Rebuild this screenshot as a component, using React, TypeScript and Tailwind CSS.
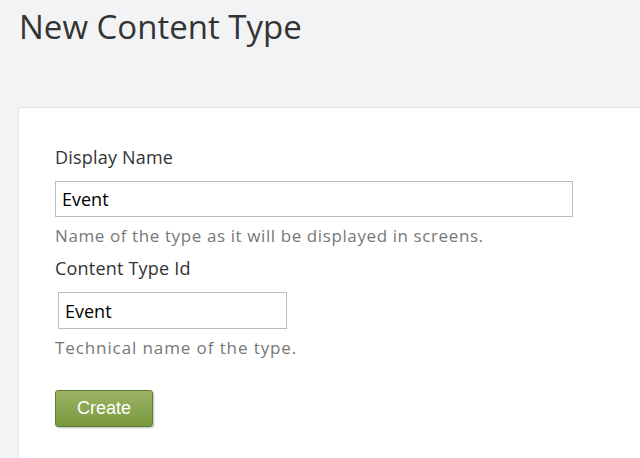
import React from 'react';

const App = () => {
    return (
        <div className="min-h-[458px] bg-[#f2f3f5] pt-[4px] pl-[18px] font-['Open_Sans',sans-serif] overflow-hidden">
            <h1 className="text-[33px] leading-[46px] text-[#333] pl-[1px] mb-[57px]">New Content Type</h1>

            <div className="bg-white border border-[#e3e3e3] rounded-tl-[3px] border-r-0 border-b-0 pl-[36px] pt-[36px] pb-[40px]">
                <label className="block text-[18px] leading-[26px] tracking-[0.2px] text-[#333]">Display Name</label>
                <input
                    defaultValue="Event"
                    className="mt-[11px] block w-[518px] h-[36px] border border-[#bcbcbc] px-[6px] text-[18px] text-black outline-none"
                />
                <p className="mt-[8px] text-[17px] leading-[22px] tracking-[0.6px] text-[#777]">Name of the type as it will be displayed in screens.</p>

                <label className="block mt-[8px] text-[18px] leading-[26px] tracking-[0.2px] text-[#333]">Content Type Id</label>
                <input
                    defaultValue="Event"
                    className="mt-[11px] ml-[3px] block w-[229px] h-[37px] border border-[#bcbcbc] px-[6px] text-[18px] text-black outline-none"
                />
                <p className="mt-[8px] text-[17px] leading-[22px] tracking-[0.9px] text-[#777]">Technical name of the type.</p>

                <button className="mt-[31px] w-[98px] h-[37px] rounded-[3px] border border-[#5e7d32] bg-gradient-to-b from-[#9db466] to-[#789a3c] text-white text-[18px] font-['Liberation_Sans',sans-serif] shadow-[1px_1px_2px_rgba(0,0,0,0.25)]">
                    Create
                </button>
            </div>
        </div>
    );
};

export default App;
